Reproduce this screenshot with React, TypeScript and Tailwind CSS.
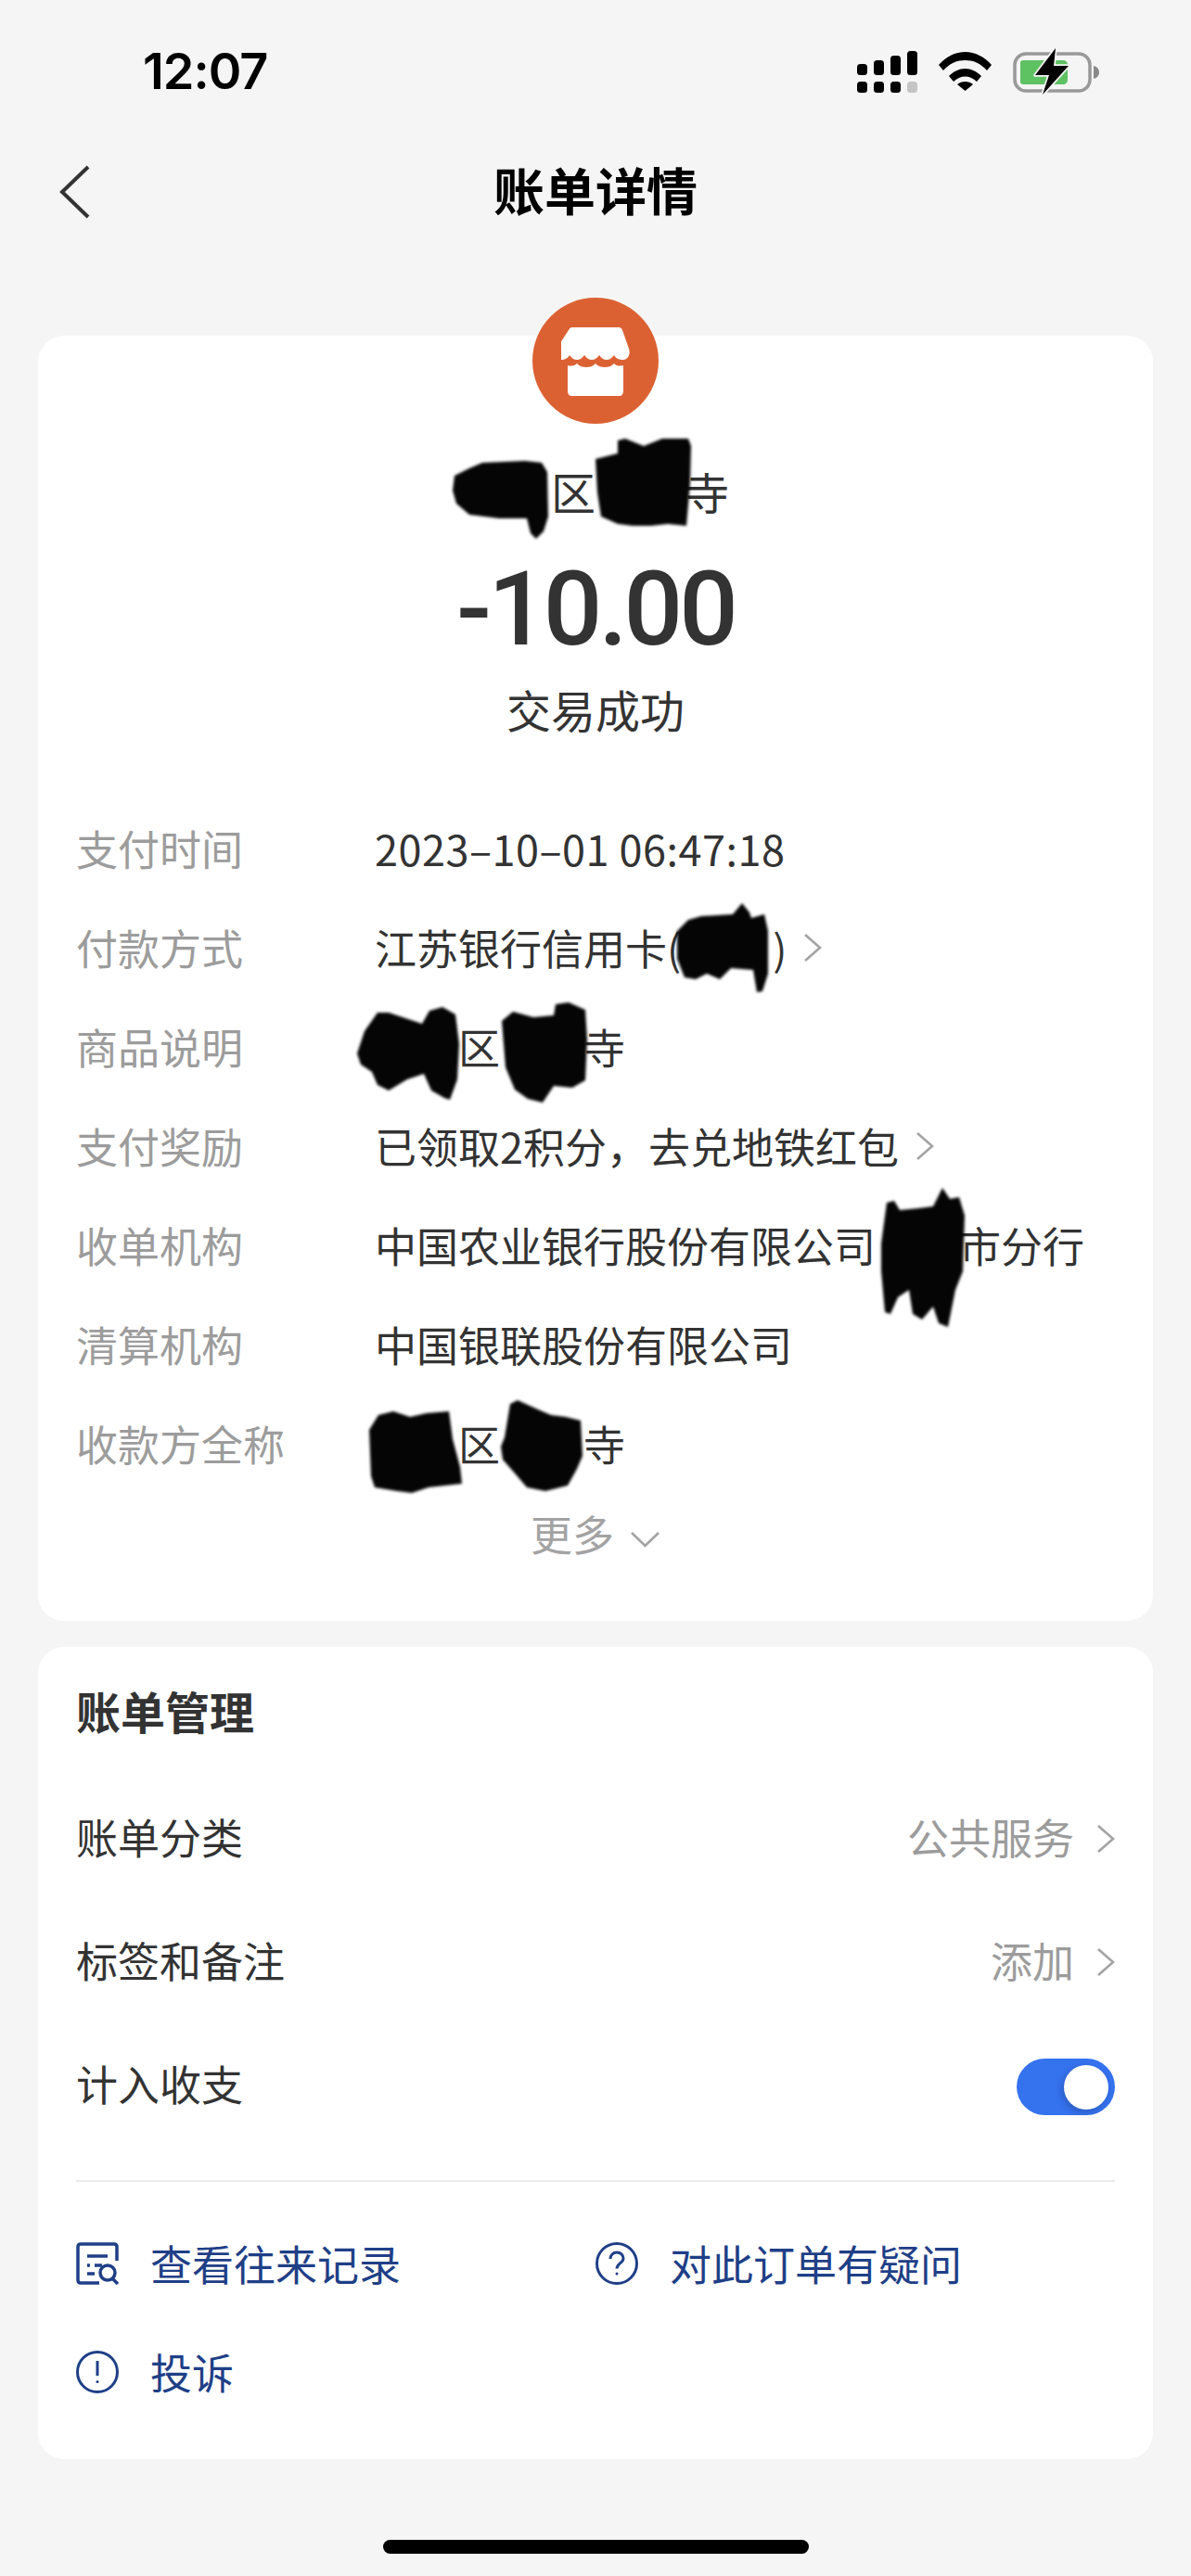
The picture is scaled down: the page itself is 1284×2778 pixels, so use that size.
import React from "react";

const CJK = "font-['Noto_Sans_CJK_SC','Noto_Sans',sans-serif]";

const Blot = ({ d, vb, className }: { d: string; vb: string; className: string }) => (
  <svg viewBox={vb} className={`absolute blur-[1.5px] ${className}`}>
    <path d={d} fill="#050505" />
  </svg>
);

const Chevron = ({ className = "" }: { className?: string }) => (
  <svg viewBox="0 0 20 32" className={`h-[32px] w-[20px] shrink-0 ${className}`} fill="none">
    <path d="M2 2l16 14L2 30" stroke="#a3a3a3" strokeWidth="2.6" />
  </svg>
);

const SignalIcon = () => (
  <svg viewBox="0 0 65 45" className="h-[45px] w-[65px]">
    <g fill="#000">
      <rect x="0" y="14" width="11" height="12" rx="3.5" />
      <rect x="18" y="10" width="11" height="16" rx="3.5" />
      <rect x="36" y="5" width="11" height="21" rx="3.5" />
      <rect x="54" y="0" width="11" height="26" rx="3.5" />
      <rect x="0" y="33" width="11" height="12" rx="3.5" />
      <rect x="18" y="33" width="11" height="12" rx="3.5" />
      <rect x="36" y="33" width="11" height="12" rx="3.5" />
    </g>
    <rect x="54" y="33" width="11" height="12" rx="3.5" fill="#c4c4c4" />
  </svg>
);

const WifiIcon = () => (
  <svg viewBox="0 0 57 42" className="h-[42px] w-[57px]">
    <path
      d="M0 14C8 5 18 0 28.500 0S49 5 57 14l-5 6C45 12 37 9 28.500 9S12 12 5 20zM11 26c5-5 11-8 17.500-8S41 21 46 26l-5 6c-3.500-3.500-8-5.500-12.500-5.500S19.500 28.500 16 32zM20 35c2-2 5.500-3 8.500-3s6.500 1 8.500 3l-8.500 7z"
      fill="#000"
    />
  </svg>
);

const BatteryIcon = () => (
  <svg viewBox="0 0 94 50" className="h-[50px] w-[94px]">
    <rect x="2" y="6" width="81" height="40" rx="12" fill="none" stroke="#999" strokeWidth="3.500" />
    <path d="M87 19c4 1 6 4 6 7s-2 6-6 7z" fill="#8a8a8a" />
    <path d="M11 13h43c3 0 5 2 5 5v16c0 3-2 5-5 5H11c-2 0-3-1-3-3V16c0-2 1-3 3-3z" fill="#5ec162" />
    <path
      d="M46 0L24 29h15l-7 21 28-31H44z"
      fill="#000"
      stroke="#f5f5f5"
      strokeWidth="3.500"
      paintOrder="stroke"
      strokeLinejoin="round"
    />
  </svg>
);

const StoreIcon = () => (
  <svg viewBox="0 0 74 74" className="h-[74px] w-[74px]">
    <path
      d="M12 0h50c2 0 3 1 4 3l7 20c2 6-1 12-6 12-4 0-8-1-10-5-2 3-5 5-8 5s-6-2-8-5c-2 3-5 5-8 5s-6-2-8-5c-2 3-5 5-8 5s-6-2-8-5c-2 4-6 5-9 5-5 0-7-6-5-12L8 3c1-2 2-3 4-3z"
      fill="#fff"
    />
    <path
      d="M7 41c3 1 7 1 10-2 3 3 6 4 10 4s7-1 10-4c3 3 6 4 10 4s7-1 10-4c3 3 6 3 10 2v28c0 3-2 5-4 5H11c-2 0-4-2-4-5z"
      fill="#fff"
    />
  </svg>
);

const DocSearchIcon = () => (
  <svg viewBox="0 0 46 46" className="h-[46px] w-[46px] shrink-0" fill="none" stroke="#1f3f87" strokeWidth="3.500">
    <path d="M44 20V5c0-2-1-3-3-3H5C3 2 2 3 2 5v36c0 2 1 3 3 3h20" />
    <path d="M12 15h22M12 25h3M20 25h8M12 34h8" />
    <circle cx="34" cy="33" r="8" />
    <path d="M39 39l6 6" />
  </svg>
);

const CircleGlyphIcon = ({ glyph }: { glyph: "?" | "!" }) => (
  <svg viewBox="0 0 46 46" className="h-[46px] w-[46px] shrink-0" fill="none" stroke="#1f3f87" strokeWidth="3">
    <circle cx="23" cy="23" r="21.500" />
    {glyph === "?" ? (
      <>
        <path d="M16 18c0-4 3-7 7-7s7 3 7 6.500c0 5-7 5.500-7 11" />
        <circle cx="23" cy="34" r="1.500" fill="#1f3f87" stroke="none" />
      </>
    ) : (
      <>
        <path d="M23 11v16" />
        <circle cx="23" cy="33.500" r="1.500" fill="#1f3f87" stroke="none" />
      </>
    )}
  </svg>
);

const DetailRow = ({ label, children }: { label: string; children: React.ReactNode }) => (
  <div className="flex h-[107px] items-center pb-[4px] pl-[41px] text-[45px] leading-[60px]">
    <span className="w-[322px] shrink-0 text-[#9c9c9c]">{label}</span>
    <div className="flex items-center whitespace-nowrap text-[#333333]">{children}</div>
  </div>
);

const ManageRow = ({ label, children }: { label: string; children?: React.ReactNode }) => (
  <div className="flex h-[133px] items-center justify-between pb-[3px] pl-[41px] pr-[41px] text-[45px] leading-[60px] text-[#333333]">
    <span>{label}</span>
    {children}
  </div>
);

const ActionLink = ({ icon, label, className = "" }: { icon: React.ReactNode; label: string; className?: string }) => (
  <div className={`flex h-[60px] items-center gap-[34px] text-[45px] leading-[60px] text-[#1f3f87] ${className}`}>
    {icon}
    <span>{label}</span>
  </div>
);

export default function App() {
  return (
    <div className={`min-h-[2778px] w-[1284px] overflow-hidden bg-[#f5f5f5] ${CJK}`}>
      {/* status bar */}
      <div className="flex h-[154px] items-center justify-between pl-[154px] pr-[98px]">
        <span className="font-['Inter',sans-serif] text-[54px] font-semibold leading-none tracking-[-1px] text-black">
          12:07
        </span>
        <div className="flex items-center gap-[23px]">
          <SignalIcon />
          <WifiIcon />
          <BatteryIcon />
        </div>
      </div>

      {/* nav */}
      <div className="relative flex h-[106px] items-center justify-center">
        <svg viewBox="0 0 34 58" className="absolute left-[63px] top-[24px] h-[58px] w-[34px]" fill="none">
          <path d="M32 2L4 29l28 27" stroke="#333" strokeWidth="4" />
        </svg>
        <span className="-mt-[7px] text-[55px] font-bold leading-none text-black">账单详情</span>
      </div>

      {/* bill card */}
      <div className="mx-[41px] mt-[102px] flex h-[1386px] flex-col rounded-[28px] bg-white">
        <div className="mx-auto -mt-[41px] flex h-[136px] w-[136px] items-center justify-center rounded-full bg-[#dc6132] pt-[2px]">
          <StoreIcon />
        </div>

        <div className="mt-[42px] flex h-[60px] items-center justify-center text-[48px] leading-[60px] text-[#333333]">
          <span className="relative inline-block h-[60px] w-[96px]">
            <Blot
              vb="0 0 103 84"
              className="left-[-10px] top-[-2px] h-[84px] w-[103px]"
              d="M2 16L18 8 32 2 78 0 96 2 102 12 103 60 98 76 90 84 84 78 80 62 50 62 18 58 4 46 0 32z"
            />
          </span>
          <span>区</span>
          <span className="relative inline-block h-[60px] w-[96px]">
            <Blot
              vb="0 0 103 96"
              className="left-[0px] top-[-28px] h-[96px] w-[103px]"
              d="M0 24L8 22 24 18 24 4 32 2 52 10 72 2 100 2 103 10 102 50 98 96 78 94 60 96 40 96 24 94 6 86 2 60z"
            />
          </span>
          <span>寺</span>
        </div>

        <div className="mt-[38px] flex h-[120px] items-center justify-center font-['Roboto',sans-serif] text-[112px] font-medium leading-none tracking-[-4px] text-[#333333]">
          -10.00
        </div>
        <div className="mt-[17px] flex h-[60px] items-center justify-center text-[48px] leading-[60px] text-[#333333]">
          交易成功
        </div>

        <div className="mt-[69px]">
          <DetailRow label="支付时间">
            <span className="tracking-[0.5px]">2023–10–01 06:47:18</span>
          </DetailRow>
          <DetailRow label="付款方式">
            <span>江苏银行信用卡(</span>
            <span className="relative inline-block h-[60px] w-[99px]">
              <Blot
                vb="0 0 100 96"
                className="left-[-6px] top-[-18px] h-[96px] w-[100px]"
                d="M2 30L14 18 28 14 62 12 72 0 80 10 82 16 96 12 100 30 100 76 94 95 88 96 84 72 60 70 48 82 34 76 22 82 10 80 2 60z"
              />
            </span>
            <span>)</span>
            <Chevron className="ml-[18px]" />
          </DetailRow>
          <DetailRow label="商品说明">
            <span className="relative inline-block h-[60px] w-[90px]">
              <Blot
                vb="0 0 110 100"
                className="left-[-19px] top-[-13px] h-[100px] w-[110px]"
                d="M0 50L8 26 22 6 34 6 70 18 78 4 92 0 106 8 110 40 108 78 100 100 94 98 80 90 72 72 54 78 34 90 22 84 16 70 4 62z"
              />
            </span>
            <span>区</span>
            <span className="relative inline-block h-[60px] w-[90px]">
              <Blot
                vb="0 0 92 108"
                className="left-[2px] top-[-18px] h-[108px] w-[92px]"
                d="M0 20L12 10 34 16 56 14 58 2 72 0 90 8 92 40 90 84 76 92 56 90 44 108 28 104 14 94 4 70z"
              />
            </span>
            <span>寺</span>
          </DetailRow>
          <DetailRow label="支付奖励">
            <span>已领取2积分，去兑地铁红包</span>
            <Chevron className="ml-[18px]" />
          </DetailRow>
          <DetailRow label="收单机构">
            <span>中国农业银行股份有限公司</span>
            <span className="relative inline-block h-[60px] w-[90px]">
              <Blot
                vb="0 0 90 150"
                className="left-[6px] top-[-32px] h-[150px] w-[90px]"
                d="M0 60L6 16 14 14 20 24 40 22 56 20 66 0 74 12 84 10 90 30 88 90 80 110 72 150 62 146 56 128 44 142 34 136 30 110 18 118 10 136 4 134 0 90z"
              />
            </span>
            <span>市分行</span>
          </DetailRow>
          <DetailRow label="清算机构">
            <span>中国银联股份有限公司</span>
          </DetailRow>
          <DetailRow label="收款方全称">
            <span className="relative inline-block h-[60px] w-[90px]">
              <Blot
                vb="0 0 102 88"
                className="left-[-8px] top-[-5px] h-[88px] w-[102px]"
                d="M2 20L12 4 28 0 46 6 64 2 88 0 92 30 100 60 102 78 84 80 66 82 48 88 32 86 8 82 4 70z"
              />
            </span>
            <span>区</span>
            <span className="relative inline-block h-[60px] w-[90px]">
              <Blot
                vb="0 0 88 98"
                className="left-[1px] top-[-17px] h-[98px] w-[88px]"
                d="M4 40L10 4 18 0 40 10 54 16 70 18 86 22 88 60 82 74 72 92 48 98 28 94 16 80 2 64 0 50z"
              />
            </span>
            <span>寺</span>
          </DetailRow>
        </div>

        <div className="mt-[12px] flex h-[60px] items-center justify-center gap-[17px] text-[45px] leading-[60px] text-[#a3a3a3]">
          <span>更多</span>
          <svg viewBox="0 0 33 18" className="mt-[12px] h-[18px] w-[33px]" fill="none">
            <path d="M2 2l14.500 14L31 2" stroke="#a3a3a3" strokeWidth="2.600" />
          </svg>
        </div>
      </div>

      {/* bill management */}
      <div className="mx-[41px] mt-[28px] h-[876px] rounded-[28px] bg-white pt-[41px]">
        <div className="flex h-[60px] items-center pb-[6px] pl-[41px] text-[48px] font-bold leading-[60px] text-[#333333]">账单管理</div>
        <div className="mt-[39px]">
          <ManageRow label="账单分类">
            <div className="flex items-center gap-[24px] text-[#9c9c9c]">
              <span>公共服务</span>
              <Chevron className="mt-[3px]" />
            </div>
          </ManageRow>
          <ManageRow label="标签和备注">
            <div className="flex items-center gap-[24px] text-[#9c9c9c]">
              <span>添加</span>
              <Chevron className="mt-[3px]" />
            </div>
          </ManageRow>
          <ManageRow label="计入收支">
            <div className="mt-[7px] flex h-[61px] w-[106px] items-center justify-end rounded-full bg-[#3572ee] pr-[7px]">
              <div className="h-[48px] w-[48px] rounded-full bg-white shadow-[-2px_3px_8px_rgba(0,0,0,0.2)]" />
            </div>
          </ManageRow>
        </div>
        <div className="mx-[41px] mt-[36px] h-[2px] bg-[#ebebeb]" />
        <div className="mt-[58px] flex pl-[41px]">
          <ActionLink icon={<DocSearchIcon />} label="查看往来记录" className="w-[560px]" />
          <ActionLink icon={<CircleGlyphIcon glyph="?" />} label="对此订单有疑问" />
        </div>
        <div className="mt-[57px] pl-[41px]">
          <ActionLink icon={<CircleGlyphIcon glyph="!" />} label="投诉" />
        </div>
      </div>

      {/* home indicator */}
      <div className="mx-auto mt-[87px] h-[15px] w-[459px] rounded-full bg-black" />
    </div>
  );
}
